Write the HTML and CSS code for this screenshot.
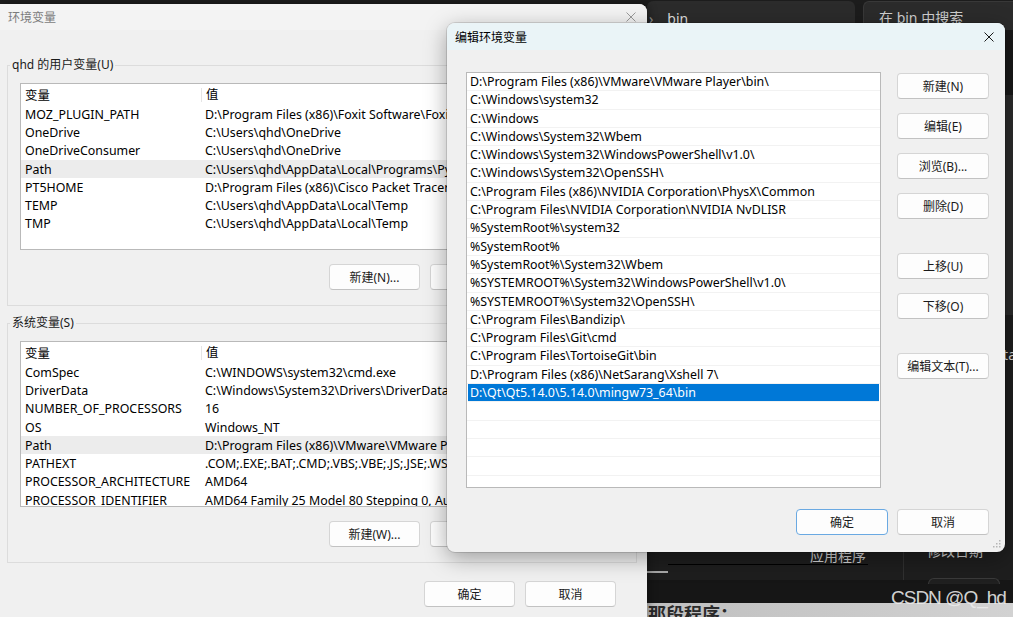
FILE: index.html
```html
<!DOCTYPE html>
<html lang="zh-CN">
<head>
  <meta charset="UTF-8">
  <meta name="viewport" content="width=device-width, initial-scale=1.0">
  <title>环境变量</title>
  <link rel="stylesheet" href="styles.css">
</head>
<body>
  <!-- explorer window behind the dialogs -->
  <div class="explorer">
    <div class="exp-top">
      <div class="crumb"><span class="chev">›</span><span class="crumb-name">bin</span></div>
      <div class="search">在 bin 中搜索</div>
    </div>
    <div class="exp-main">
      <div class="band band-a"></div>
      <div class="band band-b"></div>
      <div class="band band-c"><span class="peek">Data</span></div>
    </div>
    <div class="exp-cols">
      <div class="col col-tab"><div class="tab-bar"></div></div>
      <div class="col col-type"><span>应用程序</span></div>
      <div class="col col-date"><span>修改日期</span></div>
    </div>
    <div class="exp-foot"><div class="pill"></div></div>
    <div class="exp-page">那段程序：</div>
  </div>

  <!-- 环境变量 -->
  <div class="dialog env">
    <div class="titlebar env-title">
      <span class="title">环境变量</span>
      <svg class="close" width="10" height="10" viewBox="0 0 10 10"><path d="M0.5 0.5 L9.5 9.5 M9.5 0.5 L0.5 9.5" stroke="#9a9a9a" stroke-width="1" fill="none"/></svg>
    </div>
    <div class="env-body">
      <fieldset class="group">
        <legend>qhd 的用户变量(U)</legend>
        <div class="varlist">
          <div class="vrow vhead"><span class="k">变量</span><span class="v">值</span></div>
          <div class="vrow"><span class="k">MOZ_PLUGIN_PATH</span><span class="v">D:\Program Files (x86)\Foxit Software\Foxit PDF Reader\plugins\</span></div>
          <div class="vrow"><span class="k">OneDrive</span><span class="v">C:\Users\qhd\OneDrive</span></div>
          <div class="vrow"><span class="k">OneDriveConsumer</span><span class="v">C:\Users\qhd\OneDrive</span></div>
          <div class="vrow hot"><span class="k">Path</span><span class="v">C:\Users\qhd\AppData\Local\Programs\Python\Python39\Scripts\</span></div>
          <div class="vrow"><span class="k">PT5HOME</span><span class="v">D:\Program Files (x86)\Cisco Packet Tracer 5.3.3</span></div>
          <div class="vrow"><span class="k">TEMP</span><span class="v">C:\Users\qhd\AppData\Local\Temp</span></div>
          <div class="vrow"><span class="k">TMP</span><span class="v">C:\Users\qhd\AppData\Local\Temp</span></div>
        </div>
        <div class="btnrow">
          <button class="btn">新建(N)...</button>
          <button class="btn">编辑(E)...</button>
          <button class="btn">删除(D)</button>
        </div>
      </fieldset>

      <fieldset class="group group-sys">
        <legend>系统变量(S)</legend>
        <div class="varlist">
          <div class="vrow vhead"><span class="k">变量</span><span class="v">值</span></div>
          <div class="vrow"><span class="k">ComSpec</span><span class="v">C:\WINDOWS\system32\cmd.exe</span></div>
          <div class="vrow"><span class="k">DriverData</span><span class="v">C:\Windows\System32\Drivers\DriverData</span></div>
          <div class="vrow"><span class="k">NUMBER_OF_PROCESSORS</span><span class="v">16</span></div>
          <div class="vrow"><span class="k">OS</span><span class="v">Windows_NT</span></div>
          <div class="vrow hot"><span class="k">Path</span><span class="v">D:\Program Files (x86)\VMware\VMware Player\bin\;C:\Windows\system32</span></div>
          <div class="vrow"><span class="k">PATHEXT</span><span class="v">.COM;.EXE;.BAT;.CMD;.VBS;.VBE;.JS;.JSE;.WSF;.WSH;.MSC</span></div>
          <div class="vrow"><span class="k">PROCESSOR_ARCHITECTURE</span><span class="v">AMD64</span></div>
          <div class="vrow"><span class="k">PROCESSOR_IDENTIFIER</span><span class="v">AMD64 Family 25 Model 80 Stepping 0, AuthenticAMD</span></div>
          <div class="vrow"><span class="k">PROCESSOR_LEVEL</span><span class="v">25</span></div>
        </div>
        <div class="btnrow">
          <button class="btn">新建(W)...</button>
          <button class="btn">编辑(I)...</button>
          <button class="btn">删除(L)</button>
        </div>
      </fieldset>

      <div class="env-foot">
        <button class="btn">确定</button>
        <button class="btn">取消</button>
      </div>
    </div>
  </div>

  <!-- 编辑环境变量 -->
  <div class="dialog edit">
    <div class="titlebar edit-title">
      <span class="title">编辑环境变量</span>
      <svg class="close" width="10" height="10" viewBox="0 0 10 10"><path d="M0.5 0.5 L9.5 9.5 M9.5 0.5 L0.5 9.5" stroke="#1a1a1a" stroke-width="1" fill="none"/></svg>
    </div>
    <div class="edit-body">
      <div class="pathlist">
        <div class="prow">D:\Program Files (x86)\VMware\VMware Player\bin\</div>
        <div class="prow">C:\Windows\system32</div>
        <div class="prow">C:\Windows</div>
        <div class="prow">C:\Windows\System32\Wbem</div>
        <div class="prow">C:\Windows\System32\WindowsPowerShell\v1.0\</div>
        <div class="prow">C:\Windows\System32\OpenSSH\</div>
        <div class="prow">C:\Program Files (x86)\NVIDIA Corporation\PhysX\Common</div>
        <div class="prow">C:\Program Files\NVIDIA Corporation\NVIDIA NvDLISR</div>
        <div class="prow">%SystemRoot%\system32</div>
        <div class="prow">%SystemRoot%</div>
        <div class="prow">%SystemRoot%\System32\Wbem</div>
        <div class="prow">%SYSTEMROOT%\System32\WindowsPowerShell\v1.0\</div>
        <div class="prow">%SYSTEMROOT%\System32\OpenSSH\</div>
        <div class="prow">C:\Program Files\Bandizip\</div>
        <div class="prow">C:\Program Files\Git\cmd</div>
        <div class="prow">C:\Program Files\TortoiseGit\bin</div>
        <div class="prow">D:\Program Files (x86)\NetSarang\Xshell 7\</div>
        <div class="prow selected">D:\Qt\Qt5.14.0\5.14.0\mingw73_64\bin</div>
        <div class="prow"></div>
        <div class="prow"></div>
        <div class="prow"></div>
        <div class="prow"></div>
        <div class="prow"></div>
      </div>
      <div class="side">
        <button class="btn">新建(N)</button>
        <button class="btn">编辑(E)</button>
        <button class="btn">浏览(B)...</button>
        <button class="btn">删除(D)</button>
        <button class="btn spaced">上移(U)</button>
        <button class="btn">下移(O)</button>
        <button class="btn spaced">编辑文本(T)...</button>
      </div>
    </div>
    <div class="edit-foot">
      <button class="btn default">确定</button>
      <button class="btn">取消</button>
    </div>
    <svg class="grip" width="8" height="8" viewBox="0 0 8 8">
      <rect x="6" y="0" width="1.5" height="1.5" fill="#b5b5b5"/>
      <rect x="3" y="3" width="1.5" height="1.5" fill="#b5b5b5"/>
      <rect x="6" y="3" width="1.5" height="1.5" fill="#b5b5b5"/>
      <rect x="0" y="6" width="1.5" height="1.5" fill="#b5b5b5"/>
      <rect x="3" y="6" width="1.5" height="1.5" fill="#b5b5b5"/>
      <rect x="6" y="6" width="1.5" height="1.5" fill="#b5b5b5"/>
    </svg>
  </div>

  <div class="watermark">CSDN @Q_hd</div>
</body>
</html>
```

FILE: styles.css
```css
* {
  box-sizing: border-box;
}
html, body {
  margin: 0;
}
body {
  position: relative;
  width: 1013px;
  height: 617px;
  overflow: hidden;
  font-family: "Segoe UI", "Noto Sans", "Noto Sans CJK SC", sans-serif;
  font-size: 12px;
  color: #000;
  background: #1c1c1c;
}

/* explorer behind */
.explorer {
  position: absolute;
  inset: 0;
  display: flex;
  flex-direction: column;
  color: #dedede;
  font-size: 14px;
}
.exp-top {
  height: 30px;
  display: flex;
  padding: 1px 0 0 647px;
  background: #1c1c1c;
}
.crumb {
  width: 208px;
  display: flex;
  align-items: center;
  gap: 14px;
  padding: 5px 0 0 2px;
  background: #2b2b2b;
  border-radius: 6px 6px 0 0;
}
.chev {
  color: #9a9a9a;
}
.search {
  flex: 1;
  margin-left: 8px;
  padding: 5px 0 0 15px;
  background: #2b2b2b;
  border: 1px solid #383838;
  border-right: none;
  border-bottom: none;
  border-radius: 6px 0 0 0;
  color: #cfcfcf;
}
.exp-main {
  flex: 1;
  display: flex;
  flex-direction: column;
}
.band-a {
  height: 65px;
  background: #191919;
}
.band-b {
  height: 220px;
  background: #2b2b2b;
}
.band-c {
  flex: 1;
  background: #1e1e1e;
  display: flex;
  justify-content: flex-end;
  padding-top: 30px;
  margin-right: -3px;
}
.peek {
  line-height: 20px;
  font-size: 14px;
  color: #d8d8d8;
}
.exp-cols {
  height: 28px;
  display: flex;
  padding-left: 647px;
  background: #1e1e1e;
}
.col-tab {
  width: 21px;
}
.tab-bar {
  margin-top: 19px;
  height: 2px;
  background: #a8a8a8;
}
.col-type {
  width: 200px;
  height: 13px;
  margin-right: 35px;
  padding-left: 142px;
  border-bottom: 1px solid #000;
  overflow: hidden;
}
.col-type span {
  display: block;
  line-height: 16px;
  margin-top: -4px;
  color: #d0d0d0;
  white-space: nowrap;
}
.col-date {
  border-left: 1px solid #303030;
  padding-left: 23px;
}
.col-date span {
  display: block;
  line-height: 16px;
  margin-top: -9px;
  color: #d0d0d0;
}
.exp-foot {
  height: 23px;
  background: #161616;
  padding-left: 928px;
}
.pill {
  width: 72px;
  height: 6px;
  margin-top: -2px;
  border: 1px solid #3a3a3a;
  border-bottom: none;
  border-radius: 6px 6px 0 0;
  background: #202020;
}
.exp-page {
  height: 14px;
  overflow: hidden;
  padding-left: 648px;
  background: linear-gradient(90deg, #d8d8d8, #bdbdbd 60%, #d2d2d2);
  color: #2a2a2a;
  font-family: "Noto Sans CJK SC", sans-serif;
  font-weight: bold;
  font-size: 18px;
  line-height: 20px;
}

/* dialogs */
.dialog {
  position: absolute;
  background: #f0f0f0;
}
.titlebar {
  display: flex;
  align-items: center;
  justify-content: space-between;
}
.env {
  left: 0;
  top: 4px;
  width: 647px;
  height: 620px;
  border-radius: 0 8px 0 0;
  box-shadow: 2px 0 8px rgba(0, 0, 0, 0.35);
}
.env-title {
  height: 26px;
  padding: 0 11px 0 8px;
  border-radius: 0 8px 0 0;
  background: #f3f3f3;
}
.env-title .title {
  color: #7c7c7c;
}
.env-body {
  display: flex;
  flex-direction: column;
}
.group {
  margin: 27px 10px 0 7px;
  padding: 10px 14px 15px 12px;
  border: 1px solid #dcdcdc;
  min-width: 0;
}
.group legend {
  margin-left: -10px;
  padding: 0 2px;
  line-height: 16px;
  color: #1a1a1a;
}
.group-sys {
  margin-top: 9px;
}
.varlist {
  height: 167px;
  background: #fff;
  border: 1px solid #b9b9b9;
  overflow: hidden;
  font-size: 12.4px;
}
.group-sys .varlist {
  height: 166px;
}
.vrow {
  display: flex;
  height: 18.3px;
  align-items: center;
  white-space: nowrap;
}
.vrow.vhead {
  height: 21px;
}
.vrow.hot {
  background: #ececec;
}
.vrow .k {
  width: 180px;
  flex-shrink: 0;
  padding-left: 4px;
}
.vrow .v {
  padding-left: 4px;
}
.vhead .v {
  border-left: 1px solid #e5e5e5;
  line-height: 14px;
}
.btnrow {
  display: flex;
  justify-content: flex-end;
  gap: 10px;
  margin-top: 14px;
}
.btn {
  width: 91px;
  height: 26px;
  padding: 0;
  display: flex;
  align-items: center;
  justify-content: center;
  font: inherit;
  color: #1a1a1a;
  background: #fdfdfd;
  border: 1px solid #d5d5d5;
  border-bottom-color: #c2c2c2;
  border-radius: 4px;
}
.env-foot {
  display: flex;
  justify-content: flex-end;
  gap: 10px;
  margin-top: 18px;
  padding-right: 31px;
}

.edit {
  left: 447px;
  top: 23px;
  width: 558px;
  height: 529px;
  border-radius: 8px;
  box-shadow: 0 6px 22px rgba(0, 0, 0, 0.35), 0 0 0 1px rgba(0, 0, 0, 0.12);
}
.edit-title {
  height: 27px;
  padding: 0 11px 0 8px;
  background: #eaf4f7;
  border-radius: 8px 8px 0 0;
}
.edit-body {
  display: flex;
  gap: 16px;
  padding: 22px 16px 0 19px;
}
.pathlist {
  width: 415px;
  height: 416px;
  background: #fff;
  border: 1px solid #b9b9b9;
  overflow: hidden;
  font-size: 12.4px;
}
.prow {
  height: 18.3px;
  line-height: 18px;
  padding-left: 3px;
  border-bottom: 1px solid #f2f2f2;
  white-space: nowrap;
}
.prow.selected {
  background: #0078d7;
  color: #fff;
  margin: 0 1px;
  padding-left: 2px;
}
.side {
  display: flex;
  flex-direction: column;
  gap: 14px;
  padding-top: 1px;
}
.side .btn {
  width: 92px;
}
.side .btn.spaced {
  margin-top: 20px;
}
.edit-foot {
  display: flex;
  justify-content: flex-end;
  gap: 9px;
  margin-top: 21px;
  padding-right: 16px;
}
.edit-foot .btn {
  width: 92px;
}
.btn.default {
  border: 1px solid #6aa9e2;
}
.grip {
  position: absolute;
  right: 4px;
  bottom: 4px;
}

.watermark {
  position: absolute;
  left: 891px;
  top: 586px;
  white-space: nowrap;
  font-family: "Liberation Sans", sans-serif;
  font-size: 19px;
  letter-spacing: -1px;
  line-height: 24px;
  color: rgba(235, 235, 235, 0.9);
}
```
